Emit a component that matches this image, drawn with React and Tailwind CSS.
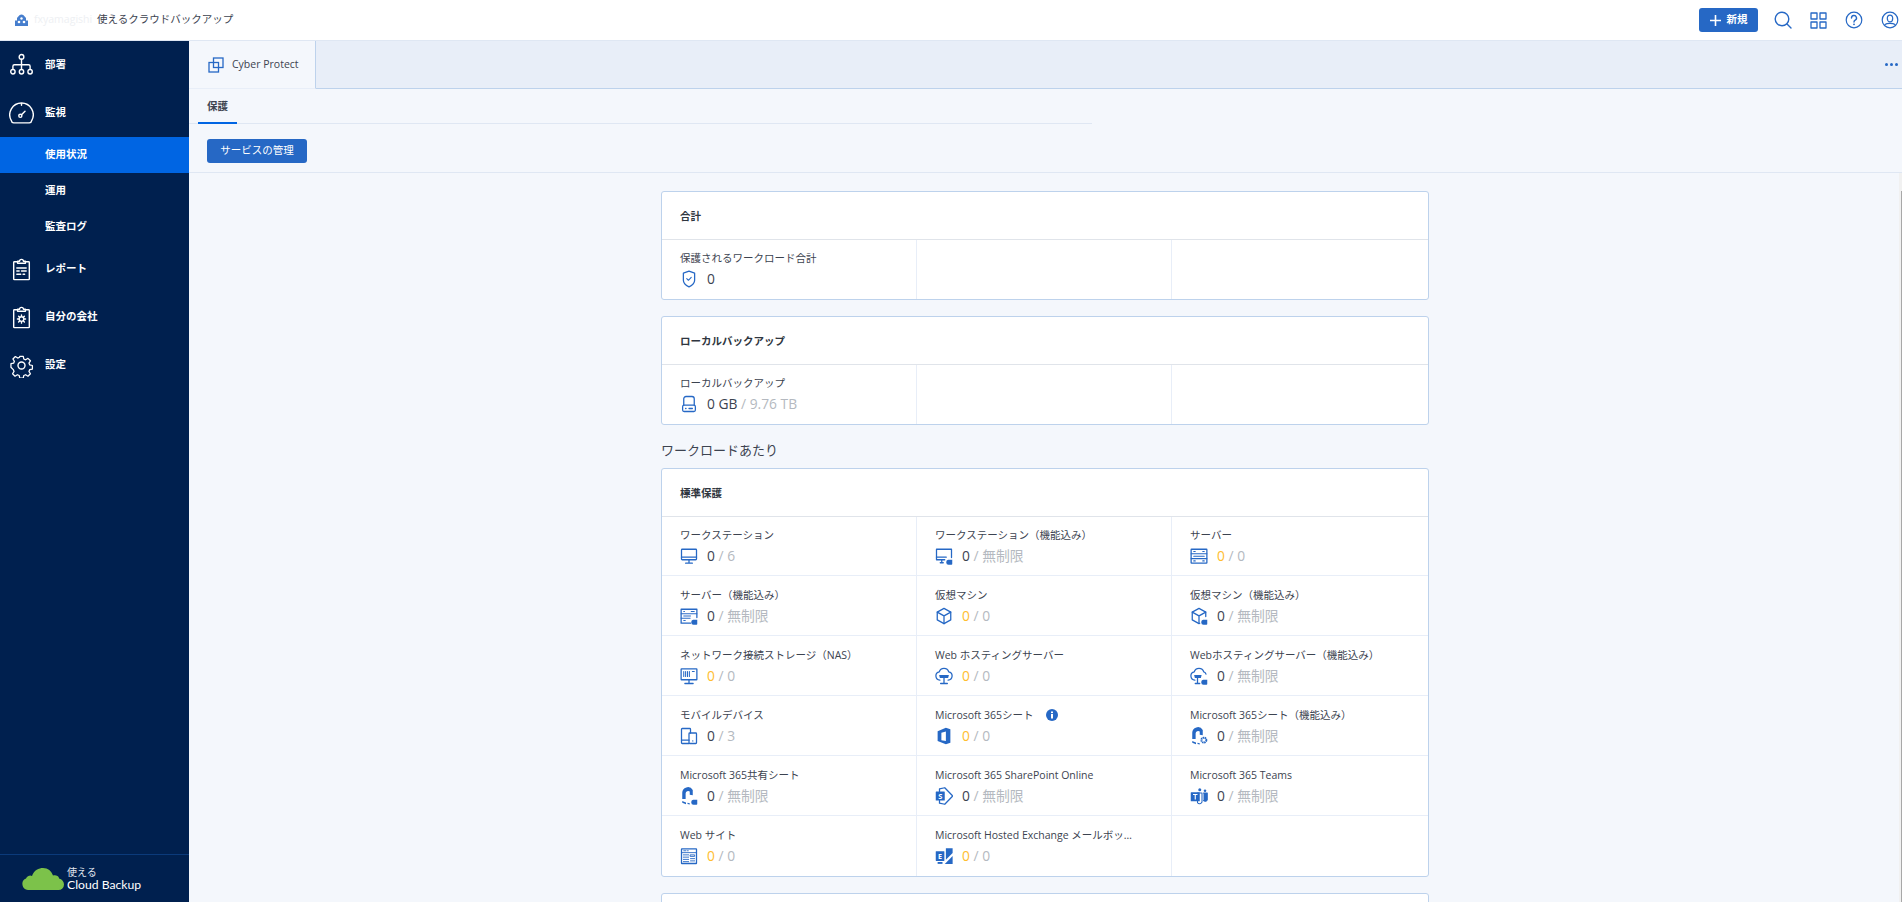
import React from 'react';

const BLUE = '#2668c5';

const Ico = ({ children, size = 18, box = 24, className = '' }) => (
  <svg width={size} height={size} viewBox={`0 0 ${box} ${box}`} fill="none" stroke="currentColor" strokeWidth="1.7" strokeLinecap="round" strokeLinejoin="round" className={`shrink-0 ${className}`}>
    {children}
  </svg>
);

// small filled tag in the corner of the "built-in" workload icons
const Badge = () => <path d="M17.500 17h5.500v5.500a1 1 0 0 1-1 1h-4a3 3 0 0 1-3-3v-.5a3 3 0 0 1 2.500-3z" fill={BLUE} stroke="none" />;

const msBody = <path d="M3 16V8a7.500 7.500 0 0 1 14-4v7l-4-.8V6a3.500 3.500 0 0 0-5.500 2.500V16z" fill="currentColor" stroke="none" />;
const msFeet = <path d="M3 18.500l5 2v2.500l-5-2zM10 21l3 .8v1.500l-3-.6z" fill="currentColor" stroke="none" />;

const icons = {
  shield: <><path d="M12 1.500l7.500 2.700v9.300c0 3.700-3.200 6.900-7.500 9-4.300-2.100-7.500-5.300-7.500-9V4.200z" /><path d="M9 11.500l2.200 2.200 3.800-4" strokeWidth="1.400" /></>,
  drive: <><path d="M5 13.500V5a3 3 0 0 1 3-3h8a3 3 0 0 1 3 3v8.500" /><rect x="3.500" y="13.500" width="17" height="8.500" rx="2" /><path d="M7.500 18h.5M12 18h4.500" /></>,
  desktop: <><rect x="2" y="3" width="20" height="14" rx="1" /><path d="M2 13.500h20" /><path d="M12 17v4M7.500 21.500h9" /></>,
  desktopB: <><path d="M13 17H2V3h20v11" /><path d="M2 13.500h13" /><path d="M7 21h4M9 17v4" /><Badge /></>,
  server: <><rect x="1.500" y="3" width="21" height="18.500" rx=".5" /><path d="M1.500 9h21M1.500 15.500h21M5 6h2M17 6h2M5 12.200h14M5 18.500h2M17 18.500h2" strokeWidth="1.400" /></>,
  serverB: <><path d="M14 21.500H1.500V3h21v11" /><path d="M1.500 9h21M1.500 15h12M5 6h1M15 6h4M5 12h9M5 18h2" strokeWidth="1.300" /><Badge /></>,
  box: <><path d="M12 1.800l9 5v10.400l-9 5-9-5V6.800z" /><path d="M3 6.800l9 5 9-5M12 11.800v10.400" /></>,
  boxB: <><path d="M13 21.700l-1 .5-9-5V6.800l9-5 9 5v6" /><path d="M3 6.800l9 5 9-5M12 11.800v9" /><Badge /></>,
  nas: <><rect x="1.500" y="2.500" width="21" height="14.500" rx=".5" /><path d="M5 6v6.500M7.500 6v6.500M10 6v6.500M12.500 6v6.500M16.500 6h2.500" strokeWidth="1.400" /><path d="M12 17v5M6.500 22h11" /></>,
  cloudWeb: <><path d="M6.500 17.500a5.500 5.500 0 0 1-.8-10.900 6.500 6.500 0 0 1 12.600 0 5.500 5.500 0 0 1-.8 10.900" /><path d="M5.500 10.500h13l-1 4h-11z" fill="currentColor" stroke="none" /><path d="M12 14.500v7M7.500 22h9" /></>,
  cloudWebB: <><path d="M6.500 17.500a5.500 5.500 0 0 1-.8-10.900 6.500 6.500 0 0 1 12.600 0 4 4 0 0 1 3 2.900" /><path d="M5.500 10.500h10l-1 4h-8z" fill="currentColor" stroke="none" /><path d="M10 14.500v7M7 22h6" /><Badge /></>,
  mobile: <><path d="M12 22H3a1 1 0 0 1-1-1V3a1 1 0 0 1 1-1h10a1 1 0 0 1 1 1v5" /><rect x="12" y="8" width="10" height="14" rx="1" /><path d="M2 17.500h10M17 18.500h.1" /></>,
  office: <path fillRule="evenodd" d="M3.500 5.500L14.500 1l6 2v18l-6 2L3.500 18.500zM8.500 7.500l6-1.500v12.500l-6-1z" fill="currentColor" stroke="none" />,
  mshare: <>{msBody}{msFeet}<Badge /></>,
  mgear: <>{msBody}{msFeet}<circle cx="18.500" cy="17.500" r="3.300" strokeWidth="2.600" strokeDasharray="2 .7" strokeLinecap="butt" /></>,
  sharepoint: <><path d="M6 6V2.500L13 1l10 10.300a1 1 0 0 1 0 1.400L13 23l-7-1.500V18" /><rect x="1" y="6" width="12" height="12" rx=".5" fill="currentColor" stroke="none" /><text x="7" y="15.500" fontSize="10" fontFamily="Open Sans" fontWeight="700" fill="#fff" stroke="none" textAnchor="middle">S</text></>,
  teams: <><circle cx="13" cy="3.500" r="2" fill="currentColor" stroke="none" /><circle cx="20" cy="5" r="1.700" fill="currentColor" stroke="none" /><path d="M10 8h6v12a3.500 3.500 0 0 1-6 1z" strokeWidth="1.400" /><path d="M18 8h5v9a3 3 0 0 1-5 1" strokeWidth="1.400" fill="currentColor" /><rect x="1" y="7" width="12" height="12" rx=".5" fill="currentColor" stroke="none" /><path d="M4 10h6M7 10v6.500" stroke="#fff" strokeWidth="1.500" strokeLinecap="butt" /></>,
  site: <><rect x="2" y="2.500" width="20" height="19.500" rx=".5" /><path d="M2 7.500h20M5 5h3M10 5h1M4.500 10.500h7M4.500 13.500h7M4.500 16.500h7M4.500 19.500h7M14 10.500h5.500v2H14zM14 15.500h5.500M14 18.500h5.500" strokeWidth="1.200" /></>,
  exchange: <><rect x="1" y="5.500" width="11.500" height="13" rx=".5" fill="currentColor" stroke="none" /><path d="M14.500 1.500H23.500V8L14.500 17z" fill="currentColor" stroke="none" /><path d="M23.500 12v10.500H13z" fill="currentColor" stroke="none" /><path d="M3.500 20h6.500v2.500H3.500z" fill="currentColor" stroke="none" /><text x="6.700" y="15.700" fontSize="9.500" fontFamily="Open Sans" fontWeight="700" fill="#fff" stroke="none" textAnchor="middle">E</text></>,
};

const Label = ({ children, className = '' }) => (
  <div className={`h-[14px] text-[10.5px] leading-[14px] text-[#3c4350] whitespace-nowrap ${className}`}>{children}</div>
);

const Value = ({ icon, used, total, warn, unit = '' }) => (
  <div className="mt-1 flex items-center gap-[9px] h-5">
    <span className="text-[#2668c5] flex"><Ico>{icons[icon]}</Ico></span>
    <span className="text-[13.8px] leading-5 whitespace-nowrap">
      <span className={warn ? 'text-[#ffbd2e]' : 'text-[#3b4350]'}>{used}{unit}</span>
      {total && <span className="text-[#b4b9c0]"> / {total}</span>}
    </span>
  </div>
);

const Cell = ({ label, note, truncate, ...value }) => (
  <div className="h-[60px] pl-[18px] pt-3 border-r border-b border-[#e8eef8] [&:nth-child(3n)]:border-r-0 [&:nth-last-child(-n+3)]:border-b-0 [&:nth-child(-n+3)]:h-[59px] [&:nth-child(-n+3)]:pt-[11px] min-w-0">
    <div className="flex items-center">
      <Label className={truncate ? 'truncate max-w-[198px]' : ''}>{label}</Label>
      {note && (
        <svg width="12" height="12" viewBox="0 0 12 12" className="ml-[12px]">
          <circle cx="6" cy="6" r="6" fill="#2668c5" />
          <rect x="5" y="5" width="2" height="4.500" fill="#fff" />
          <rect x="5" y="2.500" width="2" height="1.600" fill="#fff" />
        </svg>
      )}
    </div>
    {label && <Value {...value} />}
  </div>
);

const Card = ({ title, cells, className = '' }) => (
  <section className={`bg-white rounded-[3px] border border-[#bdd2ec] ${className}`}>
    <h3 className="h-12 pt-[2px] pl-[18px] flex items-center text-[10.5px] font-bold text-[#2f3640] border-b border-[#e0e4ea]">{title}</h3>
    <div className="grid grid-cols-[255px_255px_1fr]">
      {cells.map((c, i) => <Cell key={i} {...c} />)}
    </div>
  </section>
);

const standard = [
  { label: 'ワークステーション', icon: 'desktop', used: 0, total: '6' },
  { label: 'ワークステーション（機能込み）', icon: 'desktopB', used: 0, total: '無制限' },
  { label: 'サーバー', icon: 'server', used: 0, total: '0', warn: true },
  { label: 'サーバー（機能込み）', icon: 'serverB', used: 0, total: '無制限' },
  { label: '仮想マシン', icon: 'box', used: 0, total: '0', warn: true },
  { label: '仮想マシン（機能込み）', icon: 'boxB', used: 0, total: '無制限' },
  { label: 'ネットワーク接続ストレージ（NAS）', icon: 'nas', used: 0, total: '0', warn: true },
  { label: 'Web ホスティングサーバー', icon: 'cloudWeb', used: 0, total: '0', warn: true },
  { label: 'Webホスティングサーバー（機能込み）', icon: 'cloudWebB', used: 0, total: '無制限' },
  { label: 'モバイルデバイス', icon: 'mobile', used: 0, total: '3' },
  { label: 'Microsoft 365シート', icon: 'office', used: 0, total: '0', warn: true, note: true },
  { label: 'Microsoft 365シート（機能込み）', icon: 'mgear', used: 0, total: '無制限' },
  { label: 'Microsoft 365共有シート', icon: 'mshare', used: 0, total: '無制限' },
  { label: 'Microsoft 365 SharePoint Online', icon: 'sharepoint', used: 0, total: '無制限' },
  { label: 'Microsoft 365 Teams', icon: 'teams', used: 0, total: '無制限' },
  { label: 'Web サイト', icon: 'site', used: 0, total: '0', warn: true },
  { label: 'Microsoft Hosted Exchange メールボックス', icon: 'exchange', used: 0, total: '0', warn: true, truncate: true },
  {},
];

const navIcons = {
  org: <><circle cx="16" cy="5" r="3" /><circle cx="5" cy="24" r="2.800" /><circle cx="16" cy="24" r="2.800" /><circle cx="27" cy="24" r="2.800" /><path d="M16 8v13M5 21v-4a2 2 0 0 1 2-2h18a2 2 0 0 1 2 2v4" /></>,
  gauge: <><path d="M6 28a3.500 3.500 0 0 1-3-3A15 15 0 1 1 29 25a3.500 3.500 0 0 1-3 3z" /><path d="M16 3.500v2" /><circle cx="14.500" cy="19" r="2" /><path d="M16 17.500l4.500-4.500" /></>,
  report: <><path d="M11 6H7a1 1 0 0 0-1 1v21a1 1 0 0 0 1 1h18a1 1 0 0 0 1-1V7a1 1 0 0 0-1-1h-4" /><path d="M11 8V5.500h2.500a2.500 2.500 0 0 1 5 0H21V8z" /><path d="M10 14h12M10 18h3M16 18h6M10 22h5M18 22h2" /></>,
  company: <><path d="M11 6H7a1 1 0 0 0-1 1v21a1 1 0 0 0 1 1h18a1 1 0 0 0 1-1V7a1 1 0 0 0-1-1h-4" /><path d="M11 8V5.500h2.500a2.500 2.500 0 0 1 5 0H21V8z" /><circle cx="16" cy="18" r="3" /><path d="M16 12.800v1.400M16 21.800v1.400M10.800 18h1.400M19.800 18h1.400M12.300 14.300l1 1M18.700 20.700l1 1M12.300 21.700l1-1M18.700 15.300l1-1" /></>,
  gear: <><circle cx="16" cy="16" r="4.500" /><path d="M13.500 3h5l.8 3.800 2.600 1.100 3.300-2.100 3.500 3.500-2.100 3.300 1.100 2.600 3.800.8v5l-3.800.8-1.100 2.600 2.100 3.300-3.500 3.500-3.300-2.100-2.600 1.100-.8 3.800h-5l-.8-3.800-2.600-1.100-3.300 2.100-3.500-3.500 2.100-3.300-1.100-2.600L1 18.500v-5l3.800-.8 1.100-2.600-2.100-3.300 3.500-3.500 3.300 2.100 2.600-1.100z" transform="translate(1.600 1.600) scale(.9)" /></>,
};

const NavItem = ({ icon, label }) => (
  <div className="h-12 flex items-center text-white">
    <span className="w-[45px] flex justify-center pr-[3px]">
      <Ico size={25} box={32} className="[stroke-width:1.800]">{navIcons[icon]}</Ico>
    </span>
    <span className="text-[10.5px] font-bold">{label}</span>
  </div>
);

const SubItem = ({ label, active }) => (
  <div className={`h-9 pl-[45px] flex items-center text-[10.5px] font-semibold text-white ${active ? 'bg-[#0065e3]' : ''}`}>{label}</div>
);

const Sidebar = () => (
  <aside className="w-[189px] shrink-0 bg-[#00204f] flex flex-col">
    <nav className="flex-1">
      <NavItem icon="org" label="部署" />
      <NavItem icon="gauge" label="監視" />
      <SubItem label="使用状況" active />
      <SubItem label="運用" />
      <SubItem label="監査ログ" />
      <NavItem icon="report" label="レポート" />
      <NavItem icon="company" label="自分の会社" />
      <NavItem icon="gear" label="設定" />
    </nav>
    <div className="h-[48px] border-t border-[#0b3a7a] flex items-start pl-[21px] pt-[9px] gap-[3px]">
      <svg width="43" height="24" viewBox="0 0 43 24" className="mt-[3px]">
        <path d="M7 23a6 6 0 0 1-2-11.500 4.500 4.500 0 0 1 6-2.500C13 3 18 1 22 1c5 0 8.500 3 10 7.500 1.500-.6 3-.5 4.500.5 1 .8 1.500 1.500 1.500 2.500 3 .8 5 3 5 6a5.500 5.500 0 0 1-5.500 5.500z" fill="#7cc24a" />
      </svg>
      <div className="text-[#e4e9f0] leading-none mt-[1px]">
        <div className="text-[10px] leading-[12px] mt-[1px]">使える</div>
        <div className="text-[12.2px] leading-[14px] text-white whitespace-nowrap font-['Lato',sans-serif]">Cloud Backup</div>
      </div>
    </div>
  </aside>
);

const Header = () => (
  <header className="h-[41px] shrink-0 bg-white border-b border-[#dfe7f3] flex items-center">
    <svg width="13" height="12" viewBox="0 0 13 12" className="ml-[15px]" fill="#2668c5" opacity=".85">
      <path d="M6.500 .5C8 .5 9 1.500 11 4v2.500h2V12H0V6.500h2V4C4 1.500 5 .5 6.500 .5z" />
      <circle cx="4" cy="8" r="1.300" fill="#fff" /><circle cx="9" cy="8" r="1.300" fill="#fff" /><circle cx="6.500" cy="4.500" r="1.200" fill="#fff" />
    </svg>
    <span className="ml-[6px] text-[10.5px] text-[#eef0f3] w-[63px]">fxyamagishi</span>
    <span className="text-[10.5px] text-[#3c4350]">使えるクラウドバックアップ</span>
    <div className="ml-auto flex items-center text-[#2668c5]">
      <button className="h-[24px] w-[59px] rounded-[3px] bg-[#2668c5] text-white text-[10.5px] font-semibold flex items-center justify-center gap-[6px]">
        <svg width="11" height="11" viewBox="0 0 11 11" stroke="#fff" strokeWidth="1.600"><path d="M5.500 0v11M0 5.500h11" /></svg>
        新規
      </button>
      <div className="ml-[16px] w-[18px] flex justify-center">
        <Ico size={18} box={18} className="[stroke-width:1.400]"><circle cx="8" cy="8" r="6.800" /><path d="M13 13l4 4" /></Ico>
      </div>
      <div className="ml-[17px] w-[18px] flex justify-center">
        <Ico size={17} box={17} className="[stroke-width:1.300]"><rect x="1" y="1" width="6" height="6" /><rect x="10" y="1" width="6" height="6" /><rect x="1" y="10" width="6" height="6" /><rect x="10" y="10" width="6" height="6" /></Ico>
      </div>
      <div className="ml-[18px] w-[18px] flex justify-center">
        <Ico size={18} box={18} className="[stroke-width:1.200]"><circle cx="9" cy="9" r="7.800" /><path d="M6.500 7a2.500 2.500 0 1 1 3.700 2.200c-.8.500-1.200 1-1.200 1.800" strokeWidth="1.400" /><path d="M9 13.300h.01" strokeWidth="1.800" /></Ico>
      </div>
      <div className="ml-[18px] mr-[3px] w-[18px] flex justify-center">
        <Ico size={18} box={18} className="[stroke-width:1.200]"><circle cx="9" cy="9" r="7.800" /><ellipse cx="9" cy="7.500" rx="2.700" ry="3.300" /><path d="M4 13.500c1-.8 3-1.200 5-1.200s4 .4 5 1.200" /></Ico>
      </div>
    </div>
  </header>
);

export default function App() {
  return (
    <div className="h-screen overflow-hidden flex flex-col bg-[#f4f7fc] font-['Open_Sans','Noto_Sans_CJK_JP',sans-serif]">
      <Header />
      <div className="flex-1 flex min-h-0">
        <Sidebar />
        <div className="flex-1 min-w-0 flex flex-col">
          {/* Tab strip */}
          <div className="h-[48px] shrink-0 flex bg-[#e8eef8] border-b border-[#bdd2ec]">
            <div className="w-[127px] -mb-px bg-[#f4f7fc] border-r border-[#bdd2ec] border-b border-b-[#e8eef8] flex items-center pl-[19px] gap-2">
              <svg width="16" height="16" viewBox="0 0 16 16" fill="none" stroke="#2668c5" strokeWidth="1.300">
                <rect x="1" y="5.500" width="9.500" height="9.500" /><rect x="5.500" y="1" width="9.500" height="9.500" />
              </svg>
              <span className="text-[10.5px] text-[#3c4350] whitespace-nowrap">Cyber Protect</span>
            </div>
            <div className="ml-auto mr-[4px] flex items-center gap-[2px]">
              <span className="w-[3px] h-[3px] rounded-full bg-[#2668c5]" />
              <span className="w-[3px] h-[3px] rounded-full bg-[#2668c5]" />
              <span className="w-[3px] h-[3px] rounded-full bg-[#2668c5]" />
            </div>
          </div>
          {/* Sub tabs */}
          <div className="h-[35px] shrink-0 w-[903px] border-b border-[#dfe7f3] pl-[9px]">
            <div className="w-[39px] h-[35px] pt-[2px] border-b-2 border-[#0065e3] flex items-center justify-center text-[10.5px] font-bold text-[#3c4350]">保護</div>
          </div>
          {/* Toolbar */}
          <div className="h-[49px] shrink-0 border-b border-[#dfe7f3] pl-[18px] pt-[12px]">
            <button className="h-6 w-[100px] rounded-[3px] bg-[#2668c5] text-white text-[10.5px]">サービスの管理</button>
          </div>
          {/* Scrolling content */}
          <div className="flex-1 min-h-0 flex">
            <main className="flex-1 min-w-0 overflow-hidden pt-[18px]">
              <div className="w-[768px] ml-[472px]">
                <Card title="合計" cells={[{ label: '保護されるワークロード合計', icon: 'shield', used: 0 }, {}, {}]} />
                <Card className="mt-4" title="ローカルバックアップ" cells={[{ label: 'ローカルバックアップ', icon: 'drive', used: 0, unit: ' GB', total: '9.76 TB' }, {}, {}]} />
                <h2 className="mt-[15px] mb-[8px] h-5 leading-5 text-[13px] text-[#3c4350]">ワークロードあたり</h2>
                <Card title="標準保護" cells={standard} />
                <div className="mt-4 h-12 bg-white rounded-[3px] border border-[#bdd2ec]" />
              </div>
            </main>
            <div className="w-[3px] shrink-0 bg-[#f1f1f1] pt-[18px] flex justify-end">
              <div className="w-px h-full bg-[#a8a8a8]" />
            </div>
          </div>
        </div>
      </div>
    </div>
  );
}
